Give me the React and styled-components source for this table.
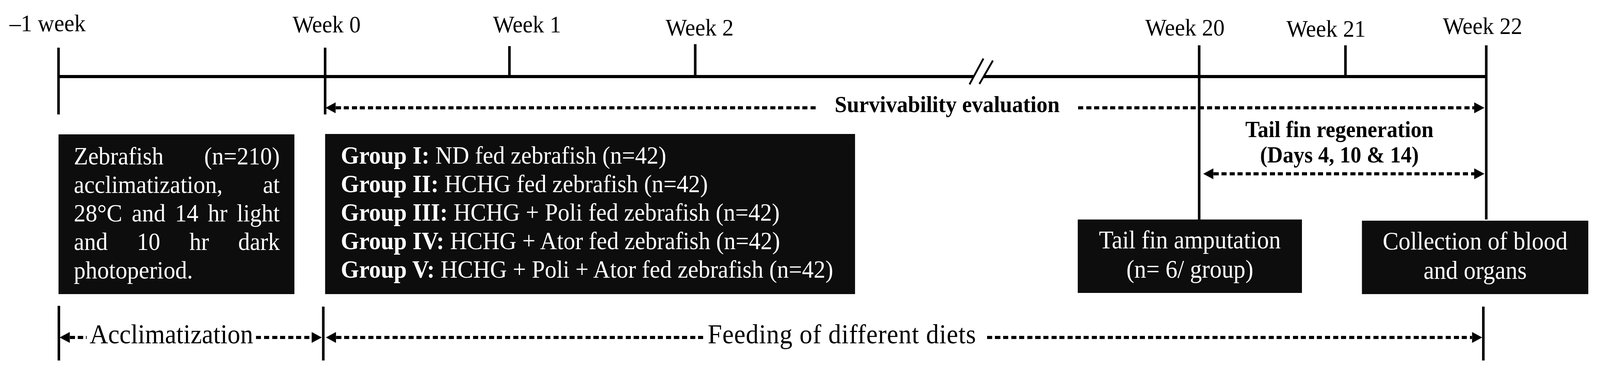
import React, { useLayoutEffect, useState } from "react";
import styled, { createGlobalStyle } from "styled-components";

const FIG_W = 4375;
const FIG_H = 955;

// column lines sit on the ticks and box edges of the timeline
const COLS = [160, 645, 84, 504, 508, 437, 609, 332, 281, 119, 45, 340, 279, 32];
const ROWS = [116, 76, 8, 93, 50, 219, 191, 30, 140, 32];

const weeks = [
  { text: "–1 week", line: 2, dx: -30, top: 28 },
  { text: "Week 0", line: 4, dx: 4, top: 31 },
  { text: "Week 1", line: 5, dx: 48, top: 31 },
  { text: "Week 2", line: 6, dx: 12, top: 39 },
  { text: "Week 20", line: 9, dx: -39, top: 39 },
  { text: "Week 21", line: 11, dx: -53, top: 42 },
  { text: "Week 22", line: 13, dx: -10, top: 35 },
];

const ticks = [
  { line: 2, rows: "2 / 5", top: 6 },
  { line: 4, rows: "2 / 5", top: 6 },
  { line: 5, rows: "2 / 4", top: 2 },
  { line: 6, rows: "2 / 4", top: -3 },
  { line: 9, rows: "2 / 7", top: 0 },
  { line: 11, rows: "2 / 4", top: 0 },
  { line: 13, rows: "2 / 7", top: 0 },
  { line: 2, rows: "9 / 10", top: 0, dx: 1 },
  { line: 4, rows: "9 / 10", top: 2, dx: -5 },
  { line: 13, rows: "9 / 10", top: 2, dx: -8 },
];

const groups = [
  ["Group I:", " ND fed zebrafish (n=42)"],
  ["Group II:", " HCHG fed zebrafish (n=42)"],
  ["Group III:", " HCHG + Poli fed zebrafish (n=42)"],
  ["Group IV:", " HCHG + Ator fed zebrafish (n=42)"],
  ["Group V:", " HCHG + Poli + Ator fed zebrafish (n=42)"],
];

const GlobalStyle = createGlobalStyle`
  html, body {
    margin: 0;
    padding: 0;
    background: #fff;
    overflow: hidden;
  }
  body {
    font-family: "Liberation Serif", "Times New Roman", serif;
    color: #000;
  }
`;

const Stage = styled.div`
  width: 100vw;
  height: 100vh;
  overflow: hidden;
  background: #fff;
`;

const Figure = styled.div`
  display: grid;
  grid-template-columns: ${COLS.map((c) => c + "px").join(" ")};
  grid-template-rows: ${ROWS.map((r) => r + "px").join(" ")};
  width: ${FIG_W}px;
  height: ${FIG_H}px;
  overflow: hidden;
  background: #fff;
  transform-origin: 0 0;
`;

const WeekLabel = styled.div`
  grid-row: 1;
  grid-column: ${(p) => p.$line} / span 1;
  justify-self: start;
  align-self: start;
  margin-top: ${(p) => p.$top}px;
  transform: translateX(calc(-50% + ${(p) => p.$dx}px));
  font-size: 62px;
  line-height: 1;
  white-space: nowrap;
`;

const Tick = styled.div`
  grid-column: ${(p) => p.$line} / span 1;
  grid-row: ${(p) => p.$rows};
  justify-self: start;
  width: 7px;
  margin-top: ${(p) => p.$top}px;
  transform: translateX(calc(-50% + ${(p) => p.$dx}px));
  background: #000;
  z-index: 2;
`;

const Axis = styled.div`
  grid-column: 2 / 13;
  grid-row: 3;
  background: #000;
`;

const BreakMark = styled.svg`
  grid-column: 7;
  grid-row: 2 / 5;
  justify-self: start;
  align-self: start;
  margin-left: 302px;
  margin-top: 29px;
  width: 85px;
  height: 77px;
  z-index: 3;
`;

const ArrowBar = styled.div`
  display: flex;
  align-items: center;
  height: 28px;
  align-self: start;
  z-index: 1;
`;

const SurvivalArrow = styled(ArrowBar)`
  grid-column: 4 / 13;
  grid-row: 4;
  margin: 62px 5px 0 1px;
`;

const AcclimArrow = styled(ArrowBar)`
  grid-column: 2 / 4;
  grid-row: 9;
  margin: 67px 9px 0 3px;
`;

const FeedingArrow = styled(ArrowBar)`
  grid-column: 4 / 13;
  grid-row: 9;
  margin: 67px 11px 0 2px;
`;

const RegenArrow = styled(ArrowBar)`
  align-self: stretch;
  margin: 2px 5px 0 11px;
`;

const HeadSvg = styled.svg`
  flex: none;
  width: 28px;
  height: 28px;
  fill: #000;
`;

const Dashes = styled.div`
  flex: ${(p) => p.$grow} 1 0;
  min-width: 0;
  height: 8px;
  background: repeating-linear-gradient(
    90deg,
    #000 0 14px,
    transparent 14px 22px
  );
`;

const FixedDashes = styled(Dashes)`
  flex: 0 0 ${(p) => p.$width}px;
`;

const ArrowLabel = styled.span`
  flex: none;
  font-size: ${(p) => p.$size}px;
  font-weight: ${(p) => (p.$bold ? 700 : 400)};
  letter-spacing: ${(p) => p.$spacing || 0}px;
  line-height: 1;
  white-space: nowrap;
  margin: 0 ${(p) => p.$right}px ${(p) => p.$lift}px ${(p) => p.$left}px;
`;

const RegenBlock = styled.div`
  grid-column: 9 / 13;
  grid-row: 5 / 7;
  display: flex;
  flex-direction: column;
  align-items: center;
  padding-top: 6px;
  z-index: 1;
`;

const RegenTitle = styled.div`
  font-size: 59px;
  font-weight: 700;
  line-height: 65px;
  text-align: center;
  margin-right: 18px;
`;

const Box = styled.div`
  background: #0d0d0d;
  color: #fff;
  font-size: 64px;
  z-index: 3;
`;

const AcclimBox = styled(Box)`
  grid-column: 2 / 3;
  grid-row: 6 / 8;
  margin-top: 1px;
  padding: 19px 40px 0 42px;
  line-height: 73px;
  text-align: justify;
  text-align-last: left;
`;

const GroupBox = styled(Box)`
  grid-column: 4 / 7;
  grid-row: 6 / 8;
  padding: 18px 0 0 43px;
  line-height: 73px;
`;

const GroupLine = styled.div`
  white-space: nowrap;

  b {
    font-weight: 700;
  }
`;

const EventBox = styled(Box)`
  grid-column: ${(p) => p.$cols};
  grid-row: 7 / 8;
  margin-top: ${(p) => p.$shift}px;
  margin-bottom: ${(p) => 3 - p.$shift}px;
  padding-top: 15px;
  font-size: 65px;
  line-height: 75px;
  text-align: center;
`;

const Head = ({ dir }) => (
  <HeadSvg viewBox="0 0 28 28">
    <polygon points={dir === "left" ? "0,14 28,0 28,28" : "0,0 28,14 0,28"} />
  </HeadSvg>
);

// stretch the fixed-size figure over whatever viewport the page gets
const useFitScale = () => {
  const [scale, setScale] = useState({ x: 1, y: 1 });
  useLayoutEffect(() => {
    const fit = () =>
      setScale({
        x: window.innerWidth / FIG_W,
        y: window.innerHeight / FIG_H,
      });
    fit();
    window.addEventListener("resize", fit);
    return () => window.removeEventListener("resize", fit);
  }, []);
  return scale;
};

export default function App() {
  const scale = useFitScale();

  return (
    <Stage>
      <GlobalStyle />
      <Figure style={{ transform: `scale(${scale.x}, ${scale.y})` }}>
        {weeks.map((w) => (
          <WeekLabel key={w.text} $line={w.line} $dx={w.dx} $top={w.top}>
            {w.text}
          </WeekLabel>
        ))}

        <Axis />

        <BreakMark viewBox="0 0 85 77">
          <polygon points="11,71 49,5 75,10 38,70" fill="#fff" />
          <line x1="11" y1="71" x2="49" y2="5" stroke="#000" strokeWidth="5" />
          <line x1="38" y1="70" x2="75" y2="10" stroke="#000" strokeWidth="5" />
        </BreakMark>

        <SurvivalArrow>
          <Head dir="left" />
          <Dashes $grow={1316} />
          <ArrowLabel $size={60} $bold $left={49} $right={50} $lift={18}>
            Survivability evaluation
          </ArrowLabel>
          <Dashes $grow={1084} />
          <Head dir="right" />
        </SurvivalArrow>

        <RegenBlock>
          <RegenTitle>
            Tail fin regeneration
            <br />
            (Days 4, 10 &amp; 14)
          </RegenTitle>
          <RegenArrow>
            <Head dir="left" />
            <Dashes $grow={1} />
            <Head dir="right" />
          </RegenArrow>
        </RegenBlock>

        <AcclimBox>
          Zebrafish (n=210) acclimatization, at 28°C and 14 hr light and 10 hr
          dark photoperiod.
        </AcclimBox>

        <GroupBox>
          {groups.map(([head, rest]) => (
            <GroupLine key={head}>
              <b>{head}</b>
              {rest}
            </GroupLine>
          ))}
        </GroupBox>

        <EventBox $cols="8 / 10" $shift={0}>
          Tail fin amputation
          <br />
          (n= 6/ group)
        </EventBox>

        <EventBox $cols="12 / 14" $shift={3}>
          Collection of blood
          <br />
          and organs
        </EventBox>

        {ticks.map((t, i) => (
          <Tick key={i} $line={t.line} $rows={t.rows} $top={t.top} $dx={t.dx || 0} />
        ))}

        <AcclimArrow>
          <Head dir="left" />
          <FixedDashes $width={46} />
          <ArrowLabel $size={70} $left={8} $right={8} $lift={17}>
            Acclimatization
          </ArrowLabel>
          <Dashes $grow={1} />
          <Head dir="right" />
        </AcclimArrow>

        <FeedingArrow>
          <Head dir="left" />
          <Dashes $grow={1004} />
          <ArrowLabel $size={70} $spacing={1} $left={8} $right={30} $lift={17}>
            Feeding of different diets
          </ArrowLabel>
          <Dashes $grow={1320} />
          <Head dir="right" />
        </FeedingArrow>
      </Figure>
    </Stage>
  );
}
